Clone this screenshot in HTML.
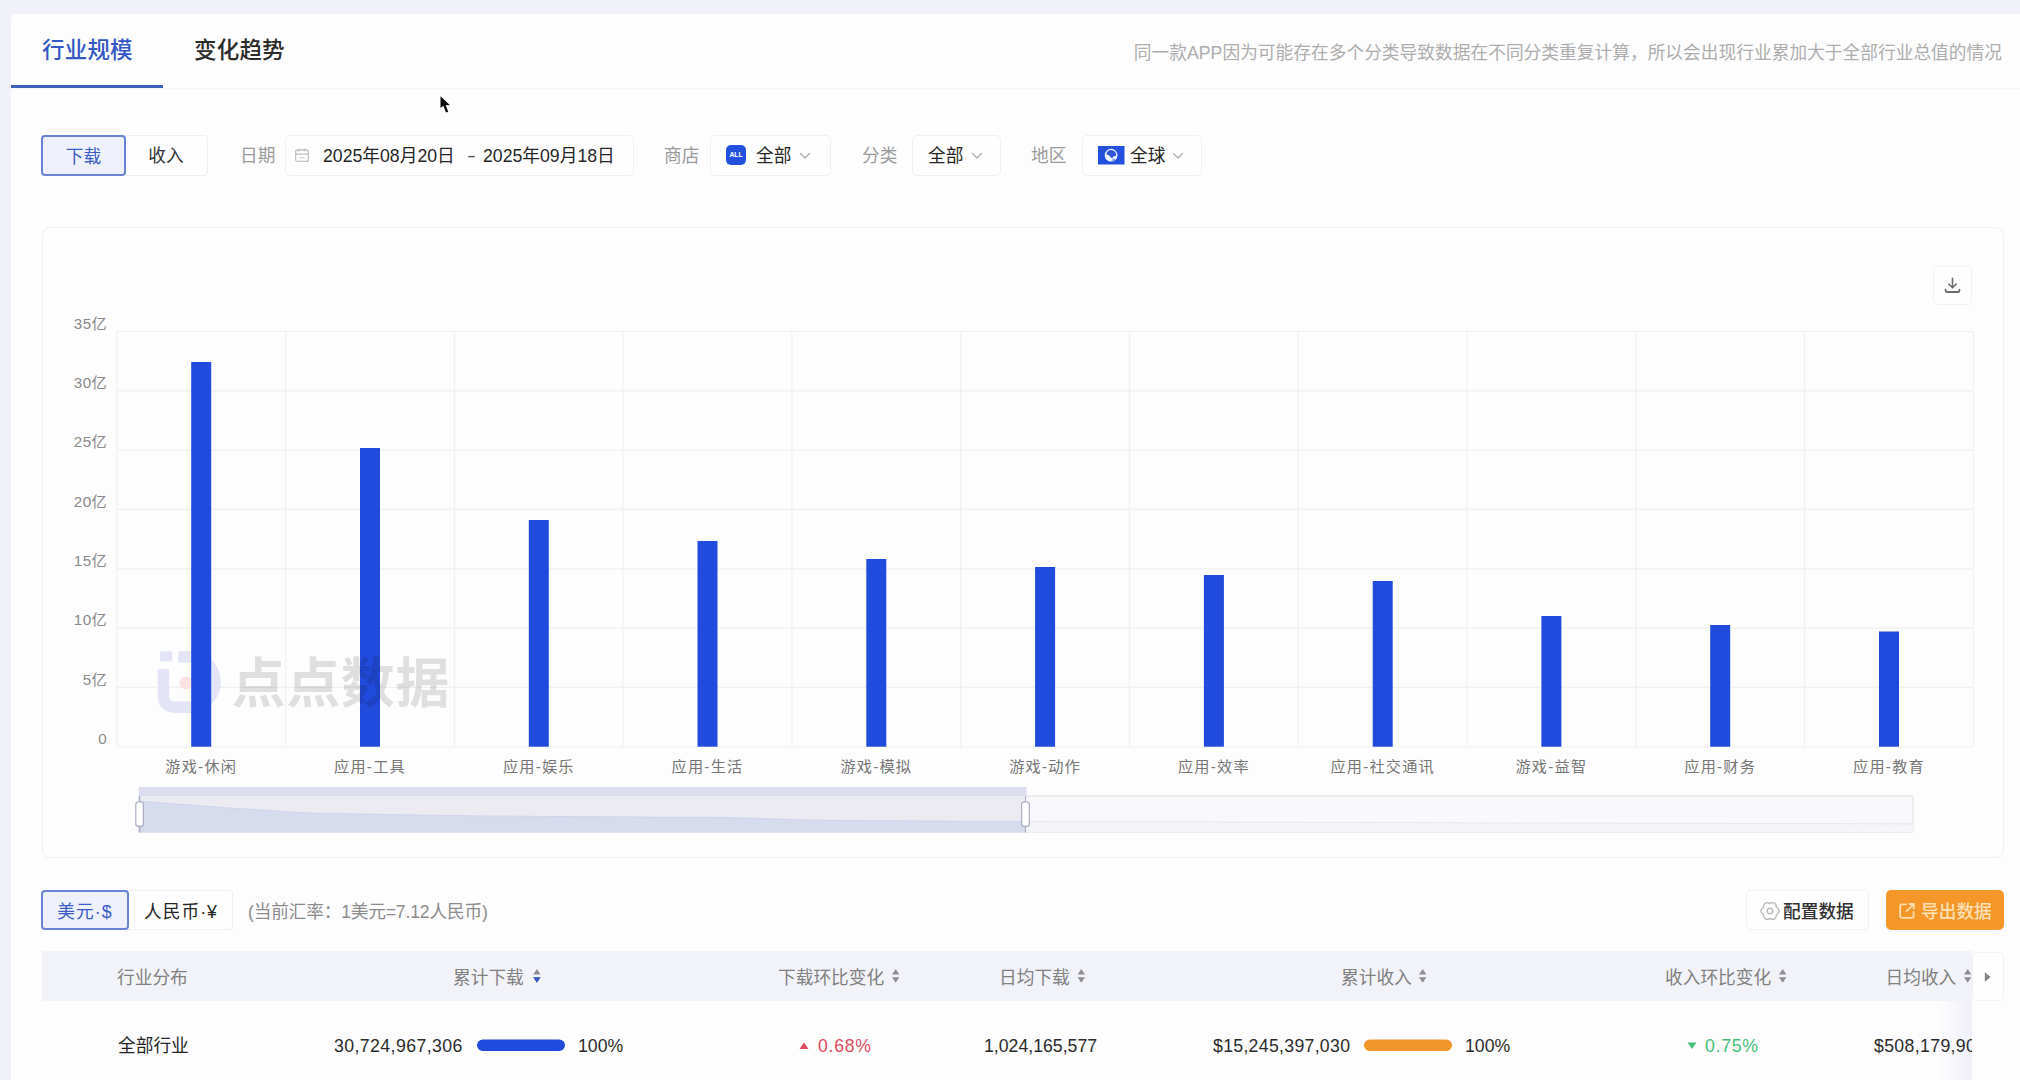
<!DOCTYPE html>
<html lang="zh-CN">
<head>
<meta charset="utf-8">
<title>行业规模</title>
<style>
*{box-sizing:border-box;margin:0;padding:0}
html,body{width:2020px;height:1080px;overflow:hidden}
body{background:#f1f2f9;font-family:"Liberation Sans","Noto Sans CJK SC",sans-serif;color:#222;position:relative}
.abs{position:absolute;white-space:nowrap}
#panel{left:10.500px;top:13.500px;width:2010px;height:1067px;background:#fdfdfe;border-radius:5px 0 0 0}
/* tabs */
.tab{top:34px;font-size:22.5px;line-height:34px;font-weight:500;letter-spacing:.2px}
#tabline{left:11px;top:85px;width:152px;height:3px;background:#3f5dbd}
#tabsep{left:11px;top:88px;width:2009px;height:1px;background:#f6f6f9}
#note{right:18px;top:42px;font-size:17.7px;line-height:22px;color:#adadad;letter-spacing:.03px}
/* filter row */
.seg{top:135px;height:41px;padding-top:.5px;border:1px solid #efeff2;background:#fefefe;font-size:17.7px;line-height:39px;text-align:center;color:#333;border-radius:4px}
.seg.on{border:2px solid #6a83d6;background:#eef1fb;color:#3b5cc6;line-height:38px;border-radius:4px}
.lbl{top:135.800px;font-size:17.7px;line-height:41px;color:#9a9a9a}
.box{top:135px;height:41px;border:1px solid #f0f0f3;border-radius:5px;background:#fefefe;font-size:17.7px;line-height:39px;color:#222}
.th{top:958px;font-size:17.7px;line-height:40px;color:#808080}
.td{top:1026.400px;font-size:17.7px;line-height:40px;color:#2b2b2b}
/* card */
#card{left:42px;top:227px;width:1962px;height:631px;border:1px solid #f0f0f2;border-radius:8px;background:#fdfdfd}
</style>
</head>
<body>
<div id="panel" class="abs"></div>

<!-- tabs -->
<div class="abs tab" style="left:42px;color:#3457c4">行业规模</div>
<div class="abs tab" style="left:194px;color:#2b2b2b">变化趋势</div>
<div id="tabsep" class="abs"></div>
<div id="tabline" class="abs"></div>
<div id="note" class="abs">同一款APP因为可能存在多个分类导致数据在不同分类重复计算，所以会出现行业累加大于全部行业总值的情况</div>

<!-- filters -->
<div class="abs seg" style="left:125px;width:83px;border-left:none;border-radius:0 4px 4px 0">收入</div>
<div class="abs seg on" style="left:41px;width:85px">下载</div>
<div class="abs lbl" style="left:240px">日期</div>
<div class="abs box" style="left:285px;width:349px"></div>
<div class="abs lbl" style="left:664px">商店</div>
<div class="abs box" style="left:710px;width:121px"></div>
<div class="abs lbl" style="left:862px">分类</div>
<div class="abs box" style="left:912px;width:89px"></div>
<div class="abs lbl" style="left:1031px">地区</div>
<div class="abs box" style="left:1082px;width:120px"></div>


<!-- filter contents -->
<svg class="abs" style="left:293.500px;top:147px" width="16" height="16" viewBox="0 0 16 16" fill="none" stroke="#c0c0c5" stroke-width="1.300"><rect x="1.600" y="3" width="12.800" height="11.400" rx="2"/><path d="M1.600 7.200h12.800M4.800 1.400v3.200M11.200 1.400v3.200"/><path d="M5.400 10.700h5.200" stroke="#d4d4d8"/></svg>
<div class="abs" style="left:323px;top:135.800px;font-size:17.7px;line-height:41px;color:#262626">2025年08月20日</div>
<div class="abs" style="left:467.400px;top:135.800px;font-size:17.7px;line-height:41px;color:#555;transform:scaleX(1.500);transform-origin:left center">-</div>
<div class="abs" style="left:483px;top:135.800px;font-size:17.7px;line-height:41px;color:#262626">2025年09月18日</div>

<div class="abs" style="left:726px;top:145px;width:20px;height:20px;border-radius:5px;background:#2350dc;color:#fff;font-size:7px;line-height:20px;text-align:center;font-weight:700;letter-spacing:-.2px">ALL</div>
<div class="abs" style="left:756px;top:135.800px;font-size:17.7px;line-height:41px;color:#262626">全部</div>
<svg class="abs" style="left:799px;top:151px" width="12" height="10" viewBox="0 0 12 10" fill="none" stroke="#b0b0b0" stroke-width="1.4" stroke-linecap="round" stroke-linejoin="round"><path d="M1.5 2.5l4.5 4.5 4.5-4.5"/></svg>

<div class="abs" style="left:928px;top:135.800px;font-size:17.7px;line-height:41px;color:#262626">全部</div>
<svg class="abs" style="left:971px;top:151px" width="12" height="10" viewBox="0 0 12 10" fill="none" stroke="#b0b0b0" stroke-width="1.4" stroke-linecap="round" stroke-linejoin="round"><path d="M1.5 2.5l4.5 4.5 4.5-4.5"/></svg>

<svg class="abs" style="left:1098px;top:146px" width="26.500" height="18.500" viewBox="0 0 26.500 18.500"><rect width="26.500" height="18.500" fill="#2350dc"/><g transform="translate(13.100 9.200)"><circle r="6.400" fill="#f4f8ff"/><path d="M-2.200 -4.600C0 -5.900 3.400 -4.600 4.800 -2C5.800 .2 4.400 1.600 2.700 .7C1.800 2.600 .5 3.800 -.6 1.900C-1.600 .4 -3 -.8 -4.600 -.7C-4.600 -2.700 -3.600 -3.900 -2.200 -4.600Z" fill="#2f57d8"/><path d="M1.500 3.600c1.200 -.4 2.500 -.2 3 .6c-1 1.300 -2.500 2 -4 2.200c-.3 -1.200 .1 -2.300 1 -2.800z" fill="#8fa6ee"/></g></svg>
<div class="abs" style="left:1130px;top:135.800px;font-size:17.7px;line-height:41px;color:#262626">全球</div>
<svg class="abs" style="left:1172px;top:151px" width="12" height="10" viewBox="0 0 12 10" fill="none" stroke="#b0b0b0" stroke-width="1.4" stroke-linecap="round" stroke-linejoin="round"><path d="M1.5 2.5l4.5 4.5 4.5-4.5"/></svg>

<!-- chart card -->
<div id="card" class="abs"></div>
<!-- CHART START -->
<svg class="abs" style="left:0;top:0" width="2020" height="1080" viewBox="0 0 2020 1080" font-family="'Liberation Sans','Noto Sans CJK SC',sans-serif">
<g stroke="#f0f0f2" stroke-width="1.15" fill="none">
<path d="M116.8 331.5H1973.4"/>
<path d="M116.8 390.8H1973.4"/>
<path d="M116.8 450.1H1973.4"/>
<path d="M116.8 509.4H1973.4"/>
<path d="M116.8 568.8H1973.4"/>
<path d="M116.8 628.1H1973.4"/>
<path d="M116.8 687.4H1973.4"/>
<path d="M116.8 746.7H1973.4"/>
<path d="M116.8 331.5V746.7"/>
<path d="M285.6 331.5V746.7"/>
<path d="M454.4 331.5V746.7"/>
<path d="M623.1 331.5V746.7"/>
<path d="M791.9 331.5V746.7"/>
<path d="M960.7 331.5V746.7"/>
<path d="M1129.5 331.5V746.7"/>
<path d="M1298.3 331.5V746.7"/>
<path d="M1467.1 331.5V746.7"/>
<path d="M1635.8 331.5V746.7"/>
<path d="M1804.6 331.5V746.7"/>
<path d="M1973.4 331.5V746.7"/>
</g>
<g font-size="15.2" fill="#8a8a8a" text-anchor="end" letter-spacing="0.35">
<text x="107" y="328.8">35亿</text>
<text x="107" y="388.1">30亿</text>
<text x="107" y="447.4">25亿</text>
<text x="107" y="506.7">20亿</text>
<text x="107" y="566.1">15亿</text>
<text x="107" y="625.4">10亿</text>
<text x="107" y="684.7">5亿</text>
<text x="107" y="744.0">0</text>
</g>
<g fill="none" stroke="#e3e5f7" stroke-width="11.5" stroke-linecap="butt"><path d="M163.4 669V695.5Q163.4 707.2 175.2 707.2H190A25.1 25.1 0 0 0 190 657H178.3"/></g>
<rect x="160" y="651.2" width="12.4" height="10.4" rx="2" fill="#e3e5f7"/>
<circle cx="186" cy="683" r="6.5" fill="#fbe3e3"/>
<g fill="#214bdc">
<rect x="191.2" y="362" width="20" height="384.7"/>
<rect x="360.0" y="448" width="20" height="298.7"/>
<rect x="528.8" y="520" width="20" height="226.7"/>
<rect x="697.5" y="541" width="20" height="205.7"/>
<rect x="866.3" y="559" width="20" height="187.7"/>
<rect x="1035.1" y="567" width="20" height="179.7"/>
<rect x="1203.9" y="575" width="20" height="171.7"/>
<rect x="1372.7" y="581" width="20" height="165.7"/>
<rect x="1541.4" y="616" width="20" height="130.7"/>
<rect x="1710.2" y="625" width="20" height="121.7"/>
<rect x="1879.0" y="631.5" width="20" height="115.2"/>
</g>
<g font-size="15.2" fill="#767676" text-anchor="middle" letter-spacing="1.2">
<text x="201.2" y="772.3">游戏-休闲</text>
<text x="370.0" y="772.3">应用-工具</text>
<text x="538.8" y="772.3">应用-娱乐</text>
<text x="707.5" y="772.3">应用-生活</text>
<text x="876.3" y="772.3">游戏-模拟</text>
<text x="1045.1" y="772.3">游戏-动作</text>
<text x="1213.9" y="772.3">应用-效率</text>
<text x="1382.7" y="772.3">应用-社交通讯</text>
<text x="1551.4" y="772.3">游戏-益智</text>
<text x="1720.2" y="772.3">应用-财务</text>
<text x="1889.0" y="772.3">应用-教育</text>
</g>
<text x="231.5" y="702.5" font-size="54" font-weight="700" fill="#000" fill-opacity="0.118" textLength="218">点点数据</text>
<rect x="138.6" y="796" width="1774.6" height="36.4" fill="#f9f9fb" stroke="#e6e6ed" stroke-width="1.3" rx="2"/>
<path d="M1025.5 821.4 L1068.2 821.6 L1152.7 821.8 L1237.2 822.1 L1321.7 822.4 L1406.2 822.6 L1490.7 822.9 L1575.2 823.2 L1659.7 823.3 L1744.2 823.5 L1828.7 823.7 L1913.2 823.9 L1913.2 832.4 L1025.5 832.4Z" fill="#f4f4f9"/>
<path d="M1025.5 821.4 L1068.2 821.6 L1152.7 821.8 L1237.2 822.1 L1321.7 822.4 L1406.2 822.6 L1490.7 822.9 L1575.2 823.2 L1659.7 823.3 L1744.2 823.5 L1828.7 823.7 L1913.2 823.9" fill="none" stroke="#e9e9ef" stroke-width="1.2"/>
<rect x="138.6" y="787" width="887.9" height="9.4" fill="#dcdef0"/>
<rect x="138.6" y="796" width="886.9" height="36.4" fill="#ebebf1"/>
<path d="M138.6 801.1 L223.1 807.6 L307.6 813.0 L392.1 814.6 L476.6 815.9 L561.1 816.5 L645.6 817.1 L730.1 817.6 L814.6 820.2 L899.1 820.9 L983.6 821.3 L1025.5 821.4 L1025.5 832.4 L138.6 832.4Z" fill="#d6dbee"/>
<path d="M138.6 801.1 L223.1 807.6 L307.6 813.0 L392.1 814.6 L476.6 815.9 L561.1 816.5 L645.6 817.1 L730.1 817.6 L814.6 820.2 L899.1 820.9 L983.6 821.3 L1025.5 821.4" fill="none" stroke="#cfd5ec" stroke-width="1"/>
<path d="M139.6 796V832.4" stroke="#a9adc2" stroke-width="1.2"/>
<rect x="135.8" y="802" width="7.6" height="24.4" rx="2.6" fill="#fff" stroke="#a9adc2" stroke-width="1.2"/>
<path d="M1025.5 796V832.4" stroke="#a9adc2" stroke-width="1.2"/>
<rect x="1021.7" y="802" width="7.6" height="24.4" rx="2.6" fill="#fff" stroke="#a9adc2" stroke-width="1.2"/>
</svg>
<!-- CHART END -->


<!-- download btn -->
<div class="abs" style="left:1933px;top:266px;width:39px;height:39px;border:1px solid #f1f1f3;border-radius:5px;background:#fefefe"></div>
<svg class="abs" style="left:1943px;top:276px" width="19" height="19" viewBox="0 0 19 19" fill="none" stroke="#6b6b6b" stroke-width="1.6" stroke-linecap="round" stroke-linejoin="round"><path d="M9.5 2.200v9.300M5.800 8l3.700 3.700 3.700-3.700"/><path d="M2.600 13.600v1.200c0 .7.500 1.200 1.200 1.200h11.400c.7 0 1.200-.5 1.200-1.200v-1.200" stroke-width="1.8"/></svg>


<!-- currency toggle -->
<div class="abs seg" style="left:128px;top:890px;width:105px;height:40px;line-height:38px;padding-top:1.700px;border-left:none;border-radius:0 4px 4px 0;color:#262626;padding-left:2px;letter-spacing:1px">人民币·¥</div>
<div class="abs seg on" style="left:41px;top:890px;width:88px;height:40px;line-height:37px;padding-top:1.700px;letter-spacing:1.100px">美元·$</div>
<div class="abs" style="left:248px;top:891.700px;font-size:17.7px;line-height:40px;color:#8c8c8c;letter-spacing:-.2px">(当前汇率：1美元=7.12人民币)</div>

<!-- right buttons -->
<div class="abs" style="left:1746px;top:890px;width:123px;height:40px;border:1px solid #f0f0f3;border-radius:5px;background:#fefefe"></div>
<svg class="abs" style="left:1759.700px;top:901px" width="20" height="20" viewBox="0 0 20 20" fill="none" stroke="#bababd" stroke-width="1.400" stroke-linejoin="round"><path d="M16.50 6.25Q21.90 10.00 16.50 13.75Q15.95 20.31 10.00 17.50Q4.05 20.31 3.50 13.75Q-1.90 10.00 3.50 6.25Q4.05 -0.31 10.00 2.50Q15.95 -0.31 16.50 6.25Z"/><circle cx="10" cy="10" r="2.800"/></svg>
<div class="abs" style="left:1783px;top:891.500px;font-size:17.7px;line-height:40px;color:#303030;font-weight:500">配置数据</div>

<div class="abs" style="left:1886px;top:890px;width:118px;height:40px;border-radius:5px;background:#f59629"></div>
<svg class="abs" style="left:1898px;top:901.500px" width="18" height="18" viewBox="0 0 18 18" fill="none" stroke="#fddcae" stroke-width="1.800" stroke-linecap="round" stroke-linejoin="round"><path d="M8 2.400H4c-1 0-1.800.8-1.800 1.800v9.800c0 1 .8 1.800 1.800 1.800h9.800c1 0 1.800-.8 1.800-1.800V10"/><path d="M11.400 2h4.400v4.400M15.400 2.400L8.600 9.200"/></svg>
<div class="abs" style="left:1921px;top:891.500px;font-size:17.7px;line-height:40px;color:#fde0b6;font-weight:500">导出数据</div>

<!-- table header -->
<div class="abs" style="left:42px;top:951px;width:1929.500px;height:49.500px;background:#f2f3f8"></div>
<div class="abs" style="left:1938px;top:1000.500px;width:33.500px;height:80px;background:linear-gradient(90deg,rgba(240,241,249,0),rgba(240,241,249,.55) 55%,#f0f1f9)"></div>
<div class="abs" style="left:1972px;top:952px;width:31.500px;height:49px;background:#fefefe;border:1px solid #f3f3f6;border-radius:4px"></div>
<div class="abs th" style="left:117px">行业分布</div>
<div class="abs th" style="left:453px">累计下载</div>
<div class="abs th" style="left:778px">下载环比变化</div>
<div class="abs th" style="left:999px">日均下载</div>
<div class="abs th" style="left:1341px">累计收入</div>
<div class="abs th" style="left:1665px">收入环比变化</div>
<div class="abs th" style="left:1885.500px">日均收入</div>
<svg class="abs" style="left:0;top:0" width="2020" height="1080" viewBox="0 0 2020 1080">
<g fill="#8e8e93">
<path d="M533.2 974.6L536.9 969.0L540.6 974.6ZM533.2 977.2L536.9 982.8L540.6 977.2Z"/>
<path d="M892.0 974.6L895.7 969.0L899.4 974.6ZM892.0 977.2L895.7 982.8L899.4 977.2Z"/>
<path d="M1077.6 974.6L1081.3 969.0L1085.0 974.6ZM1077.6 977.2L1081.3 982.8L1085.0 977.2Z"/>
<path d="M1419.0 974.6L1422.7 969.0L1426.4 974.6ZM1419.0 977.2L1422.7 982.8L1426.4 977.2Z"/>
<path d="M1779.0 974.6L1782.7 969.0L1786.4 974.6ZM1779.0 977.2L1782.7 982.8L1786.4 977.2Z"/>
<path d="M1964 974.600L1967.700 969L1971.400 974.600Z M1964 977.200L1967.700 982.800L1971.400 977.200Z"/>
</g>
<path d="M533.200 977.200L536.900 982.800L540.600 977.200Z" fill="#3457c4"/>
<path d="M1984.800 972.300L1990.700 977L1984.800 981.700Z" fill="#86868a"/>
<!-- row -->
<rect x="477" y="1039.500" width="88" height="11.500" rx="5.750" fill="#214bdc"/>
<rect x="1364" y="1039.500" width="88" height="11.500" rx="5.750" fill="#f2952b"/>
<path d="M799.500 1049L804 1042.500L808.500 1049Z" fill="#e04a5f"/>
<path d="M1687.500 1042.500L1692 1049L1696.500 1042.500Z" fill="#45bf78"/>
</svg>
<div class="abs td" style="left:118px;color:#262626">全部行业</div>
<div class="abs td" style="left:334px;letter-spacing:.42px">30,724,967,306</div>
<div class="abs td" style="left:578px">100%</div>
<div class="abs td" style="left:818px;color:#e04a5f;letter-spacing:.7px">0.68%</div>
<div class="abs td" style="left:984px">1,024,165,577</div>
<div class="abs td" style="left:1213px;letter-spacing:.3px">$15,245,397,030</div>
<div class="abs td" style="left:1465px">100%</div>
<div class="abs td" style="left:1705px;color:#45bf78;letter-spacing:.7px">0.75%</div>
<div class="abs td" style="left:1874px;width:97.500px;overflow:hidden;letter-spacing:.35px">$508,179,901</div>


<!-- mouse cursor -->
<svg class="abs" style="left:436px;top:92px" width="20" height="26" viewBox="436 92 20 26"><path d="M440.500 96.200V108L443.400 105.700L446 112.600L448.200 111.700L445.700 105.100L450 105.300Z" fill="#0a0a0a" stroke="#fff" stroke-width="1" stroke-linejoin="round" paint-order="stroke"/></svg>

</body>
</html>
